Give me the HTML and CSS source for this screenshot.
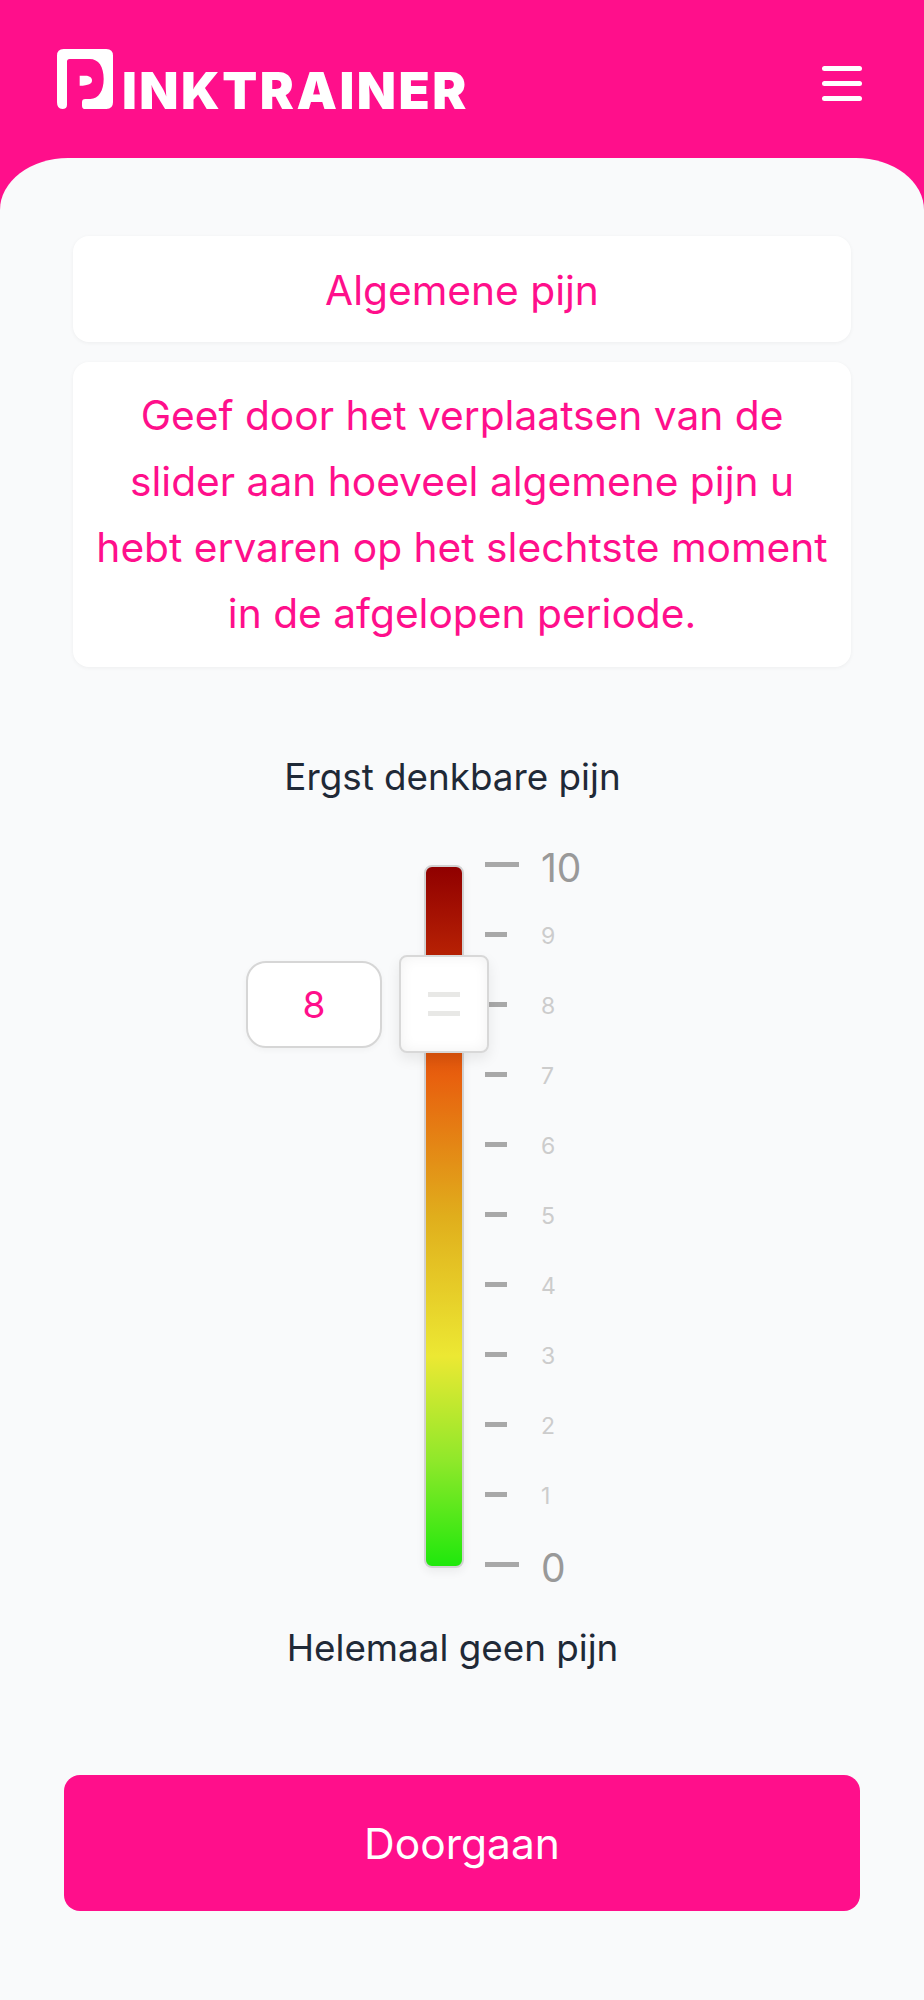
FILE: index.html
```html
<!DOCTYPE html>
<html lang="nl">
<head>
<meta charset="utf-8">
<title>Pinktrainer</title>
<link rel="stylesheet" href="styles.css">
</head>
<body>
<header class="topbar">
  <div class="logo">
    <svg class="logo-mark" viewBox="50 55 168 180" aria-hidden="true">
      <path d="M70 55H198Q218 55 218 75V215Q218 235 198 235H135Q125 235 125 225V215Q125 205 135 205H150C175 205 190 180 190 145C190 108 175 85 148 85H88Q80 85 80 93V222Q80 235 66 235Q50 235 50 215V75Q50 55 70 55Z"/>
      <path d="M118 135H135C150 135 155 142 155 150C155 158 145 165 118 165Z"/>
    </svg>
    <span class="logo-text">INKTRAINER</span>
  </div>
  <button class="menu" aria-label="Menu"><span></span><span></span><span></span></button>
</header>
<main class="content">
  <section class="card card-title">Algemene pijn</section>
  <section class="card card-text">Geef door het verplaatsen van de slider aan hoeveel algemene pijn u hebt ervaren op het slechtste moment in de afgelopen periode.</section>
  <p class="scale-label scale-top">Ergst denkbare pijn</p>
  <div class="slider">
    <div class="track"></div>
    <ol class="ticks">
      <li class="tick major"><i></i><span>10</span></li>
      <li class="tick"><i></i><span>9</span></li>
      <li class="tick"><i></i><span>8</span></li>
      <li class="tick"><i></i><span>7</span></li>
      <li class="tick"><i></i><span>6</span></li>
      <li class="tick"><i></i><span>5</span></li>
      <li class="tick"><i></i><span>4</span></li>
      <li class="tick"><i></i><span>3</span></li>
      <li class="tick"><i></i><span>2</span></li>
      <li class="tick"><i></i><span>1</span></li>
      <li class="tick major"><i></i><span>0</span></li>
    </ol>
    <div class="value">8</div>
    <div class="thumb"><b></b><b></b></div>
  </div>
  <p class="scale-label scale-bottom">Helemaal geen pijn</p>
  <button class="cta">Doorgaan</button>
</main>
</body>
</html>
```
FILE: styles.css
```css
* { box-sizing: border-box; }
html, body { margin: 0; padding: 0; }
body {
  background: #ff0f8b;
  font-family: "Inter", "Liberation Sans", sans-serif;
  min-height: 2000px;
}
.topbar {
  height: 158px;
  display: flex;
  justify-content: space-between;
  align-items: flex-start;
  padding: 48px 62px 0 57px;
}
.logo { display: flex; align-items: flex-end; gap: 9px; height: 61px; }
.logo-mark { width: 56px; height: 60px; fill: #fff; display: block; }
.logo-text {
  color: #fff;
  font-family: "Inter", sans-serif;
  font-weight: 900;
  font-size: 51px;
  line-height: 37px;
  letter-spacing: 2.5px;
}
.menu {
  border: 0;
  background: none;
  padding: 0;
  margin-top: 18px;
  width: 40px;
  display: flex;
  flex-direction: column;
  gap: 10px;
}
.menu span { display: block; height: 5px; border-radius: 3px; background: #fff; }
.content {
  height: 1842px;
  background: #f9fafb;
  border-radius: 68px 68px 0 0 / 52px 52px 0 0;
  padding: 78px 73px 0;
}
.card {
  background: #fff;
  border-radius: 16px;
  box-shadow: 0 1px 4px rgba(0,0,0,.05);
  color: #ff0f8b;
  text-align: center;
  font-size: 40.7px;
  line-height: 66px;
}
.card-title { height: 106px; line-height: 110px; }
.card-text { margin-top: 20px; height: 305px; padding: 21px 16px 0; }
.scale-label {
  margin: 0;
  padding-right: 19px;
  text-align: center;
  color: #1f2937;
  font-size: 36.8px;
  line-height: 48px;
}
.scale-top { margin-top: 86px; }
.slider {
  position: relative;
  margin: 64px 0 0 -73px;
  width: 924px;
  height: 703px;
  display: flex;
  padding-left: 424px;
  gap: 21px;
}
.track {
  width: 40px;
  height: 703px;
  border: 2px solid #d2d2d2;
  border-radius: 8px;
  background: linear-gradient(to bottom, #900000 0%, #b82204 13%, #e8600e 30%, #e0ae1c 50%, #ece833 70%, #8fe82a 85%, #1fe80c 100%);
  box-shadow: 0 4px 10px rgba(0,0,0,.06);
}
.ticks {
  list-style: none;
  margin: -1px 0 0;
  padding: 0;
  height: 700px;
  display: flex;
  flex-direction: column;
  justify-content: space-between;
}
.tick { height: 0; display: flex; align-items: center; color: #ccc; font-size: 23px; }
.tick i { display: block; width: 22px; height: 5px; background: #a8a8a8; margin-right: 34px; }
.tick span { display: block; width: 50px; margin-top: 3px; }
.major { color: #999; font-size: 39px; }
.major i { width: 34px; margin-right: 22px; }
.major span { margin-top: 6px; }
.value {
  position: absolute;
  left: 246px;
  top: 96px;
  width: 136px;
  height: 87px;
  border: 2px solid #d6d6d6;
  border-radius: 20px;
  background: #fff;
  box-shadow: 0 2px 6px rgba(0,0,0,.04);
  color: #ff0f8b;
  font-size: 37px;
  display: flex;
  align-items: center;
  justify-content: center;
}
.thumb {
  position: absolute;
  left: 399px;
  top: 90px;
  width: 90px;
  height: 98px;
  background: #fff;
  border: 2px solid #d8d8d8;
  border-radius: 8px;
  box-shadow: inset 0 0 14px rgba(0,0,0,.06), 0 6px 14px rgba(0,0,0,.08);
  display: flex;
  flex-direction: column;
  align-items: center;
  justify-content: center;
  gap: 14px;
}
.thumb b { display: block; width: 32px; height: 5px; background: #e8e8e6; }
.scale-bottom { margin-top: 56px; }
.cta {
  display: block;
  margin: 103px 0 0 -9px;
  width: 796px;
  height: 136px;
  border: 0;
  border-radius: 16px;
  background: #ff0f8b;
  color: #fff;
  font-family: inherit;
  font-size: 42.5px;
}
```
